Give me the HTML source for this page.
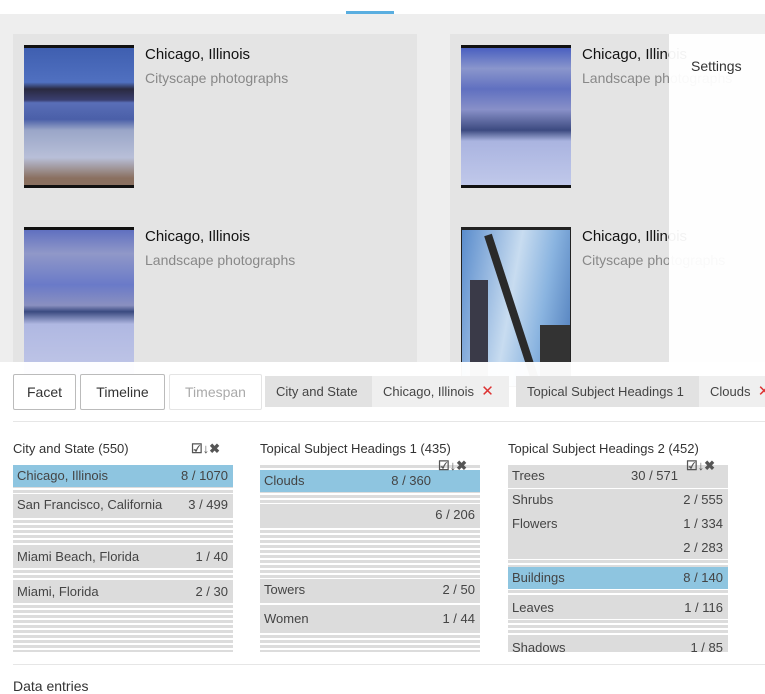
<!DOCTYPE html>
<html><head><meta charset="utf-8"><style>
*{margin:0;padding:0;box-sizing:border-box}
body{width:765px;height:682px;overflow:hidden;background:#fff;font-family:"Liberation Sans",sans-serif;position:relative}
.abs{position:absolute}
.bg{left:0;top:14px;width:765px;height:668px;background:#eeeeee}
.card{background:#e4e4e4;width:404px;height:257px}
.img{width:110px;border-top:3px solid #111;border-bottom:3px solid #111}
.t{font-size:15px;color:#111;left:132px;top:12px;white-space:nowrap}
.s{font-size:14px;color:#888;left:132px;top:36px;white-space:nowrap}
.btn{top:374px;height:36px;border:1px solid #bbb;border-radius:2px;font-size:14px;color:#333;text-align:center;line-height:34px;background:#fff}
.chip{top:376px;height:31px;font-size:13px;color:#444;line-height:31px;padding-left:11px;white-space:nowrap}
.x{color:#d33;font-size:15px}
.h{font-size:13px;color:#333;top:441px;white-space:nowrap}
.col{width:220px;background:repeating-linear-gradient(#dcdcdc 0 3px,#fff 3px 5px)}
.r{position:absolute;left:0;width:220px;height:22px;background:#dcdcdc;font-size:13px;color:#444;line-height:22px;padding:0 5px 0 4px}
.r b{font-weight:normal;float:right}
.r.a{background:#8ec5e0}
.ic{font-size:13px;color:#555;white-space:nowrap;font-weight:bold}
</style></head><body>
<div class="abs bg"></div>
<div class="abs" style="left:346px;top:11px;width:48px;height:3px;background:#5aaee0"></div>

<div class="abs card" style="left:13px;top:34px">
 <div class="abs img" style="left:11px;top:11px;height:143px;background:linear-gradient(#3f5fb0 0,#5070c0 25%,#2a2a40 30%,#3a3f70 38%,#5a6fb8 40%,#4a5fa8 52%,#9aa6c8 60%,#b8bfd8 80%,#8a7060 95%)"></div>
 <div class="abs t">Chicago, Illinois</div><div class="abs s">Cityscape photographs</div>
</div>
<div class="abs card" style="left:450px;top:34px">
 <div class="abs img" style="left:11px;top:11px;height:143px;background:linear-gradient(#4a60c0 0,#8a96cc 15%,#6070c0 30%,#8890c8 45%,#3c4a80 60%,#aab4e0 68%,#c0c8ea 100%)"></div>
 <div class="abs t">Chicago, Illinois</div><div class="abs s">Landscape photographs</div>
</div>
<div class="abs card" style="left:13px;top:216px">
 <div class="abs img" style="left:11px;top:11px;height:160px;border-bottom:none;background:linear-gradient(#6070c0 0,#9098c8 15%,#6a7ac8 35%,#8a90c0 48%,#3a4a80 52%,#b0b8e2 60%,#c4cae8 100%)"></div>
 <div class="abs t">Chicago, Illinois</div><div class="abs s">Landscape photographs</div>
</div>
<div class="abs card" style="left:450px;top:216px">
 <div class="abs img" style="left:11px;top:11px;height:160px;border:1px solid #222;border-top:3px solid #222;background:linear-gradient(100deg,#5a8ccc 0,#c8dcf0 45%,#8ab4e0 70%,#4a78b8 100%)">
  <div class="abs" style="left:22px;top:5px;width:8px;height:150px;background:#2a2a2a;transform:rotate(-18deg);transform-origin:top"></div>
  <div class="abs" style="left:8px;top:50px;width:18px;height:110px;background:#3a3a48"></div>
  <div class="abs" style="left:78px;top:95px;width:30px;height:65px;background:#333"></div>
 </div>
 <div class="abs t">Chicago, Illinois</div><div class="abs s">Cityscape photographs</div>
</div>

<div class="abs" style="left:669px;top:34px;width:96px;height:328px;background:rgba(255,255,255,0.95)"></div>
<div class="abs" style="left:691px;top:58px;font-size:14px;color:#333">Settings</div>

<div class="abs" style="left:0;top:362px;width:765px;height:320px;background:rgba(255,255,255,0.97)"></div>

<div class="abs btn" style="left:13px;width:63px">Facet</div>
<div class="abs btn" style="left:80px;width:85px">Timeline</div>
<div class="abs btn" style="left:169px;width:93px;border-color:#e4e4e4;color:#aaa">Timespan</div>
<div class="abs chip" style="left:265px;width:107px;background:#e2e2e2">City and State</div>
<div class="abs chip" style="left:372px;width:137px;background:#efefef">Chicago, Illinois &nbsp;<span class="x">✕</span></div>
<div class="abs chip" style="left:516px;width:184px;background:#e2e2e2">Topical Subject Headings 1</div>
<div class="abs chip" style="left:699px;width:70px;background:#efefef">Clouds &nbsp;<span class="x">✕</span></div>
<div class="abs" style="left:13px;top:421px;width:752px;height:1px;background:#e6e6e6"></div>

<div class="abs h" style="left:13px">City and State (550)</div>
<div class="abs ic" style="left:191px;top:441px">☑↓✖</div>
<div class="abs col" style="left:13px;top:465px;height:187px">
 <div class="r a" style="top:0">Chicago, Illinois<b>8 / 1070</b></div>
 <div class="r" style="top:29px">San Francisco, California<b>3 / 499</b></div>
 <div class="r" style="top:81px">Miami Beach, Florida<b>1 / 40</b></div>
 <div class="r" style="top:116px">Miami, Florida<b>2 / 30</b></div>
</div>

<div class="abs h" style="left:260px">Topical Subject Headings 1 (435)</div>
<div class="abs col" style="left:260px;top:465px;height:187px">
 <div class="r a" style="top:5px">Clouds<b style="margin-right:44px">8 / 360</b></div>
 <div class="r" style="top:39px"><b>6 / 206</b></div>
 <div class="r" style="top:114px">Towers<b>2 / 50</b></div>
 <div class="r" style="top:143px">Women<b>1 / 44</b></div>
</div>
<div class="abs ic" style="left:438px;top:458px">☑↓✖</div>

<div class="abs h" style="left:508px">Topical Subject Headings 2 (452)</div>
<div class="abs col" style="left:508px;top:465px;height:187px">
 <div class="r" style="top:0">Trees<b style="margin-right:45px">30 / 571</b></div>
 <div class="r" style="top:24px">Shrubs<b>2 / 555</b></div>
 <div class="r" style="top:48px">Flowers<b>1 / 334</b></div>
 <div class="r" style="top:72px"><b>2 / 283</b></div>
 <div class="r a" style="top:102px">Buildings<b>8 / 140</b></div>
 <div class="r" style="top:132px">Leaves<b>1 / 116</b></div>
 <div class="r" style="top:172px;height:15px;overflow:hidden">Shadows<b>1 / 85</b></div>
</div>
<div class="abs ic" style="left:686px;top:458px">☑↓✖</div>

<div class="abs" style="left:13px;top:664px;width:752px;height:1px;background:#e6e6e6"></div>
<div class="abs" style="left:13px;top:678px;font-size:14px;color:#333">Data entries</div>
</body></html>
